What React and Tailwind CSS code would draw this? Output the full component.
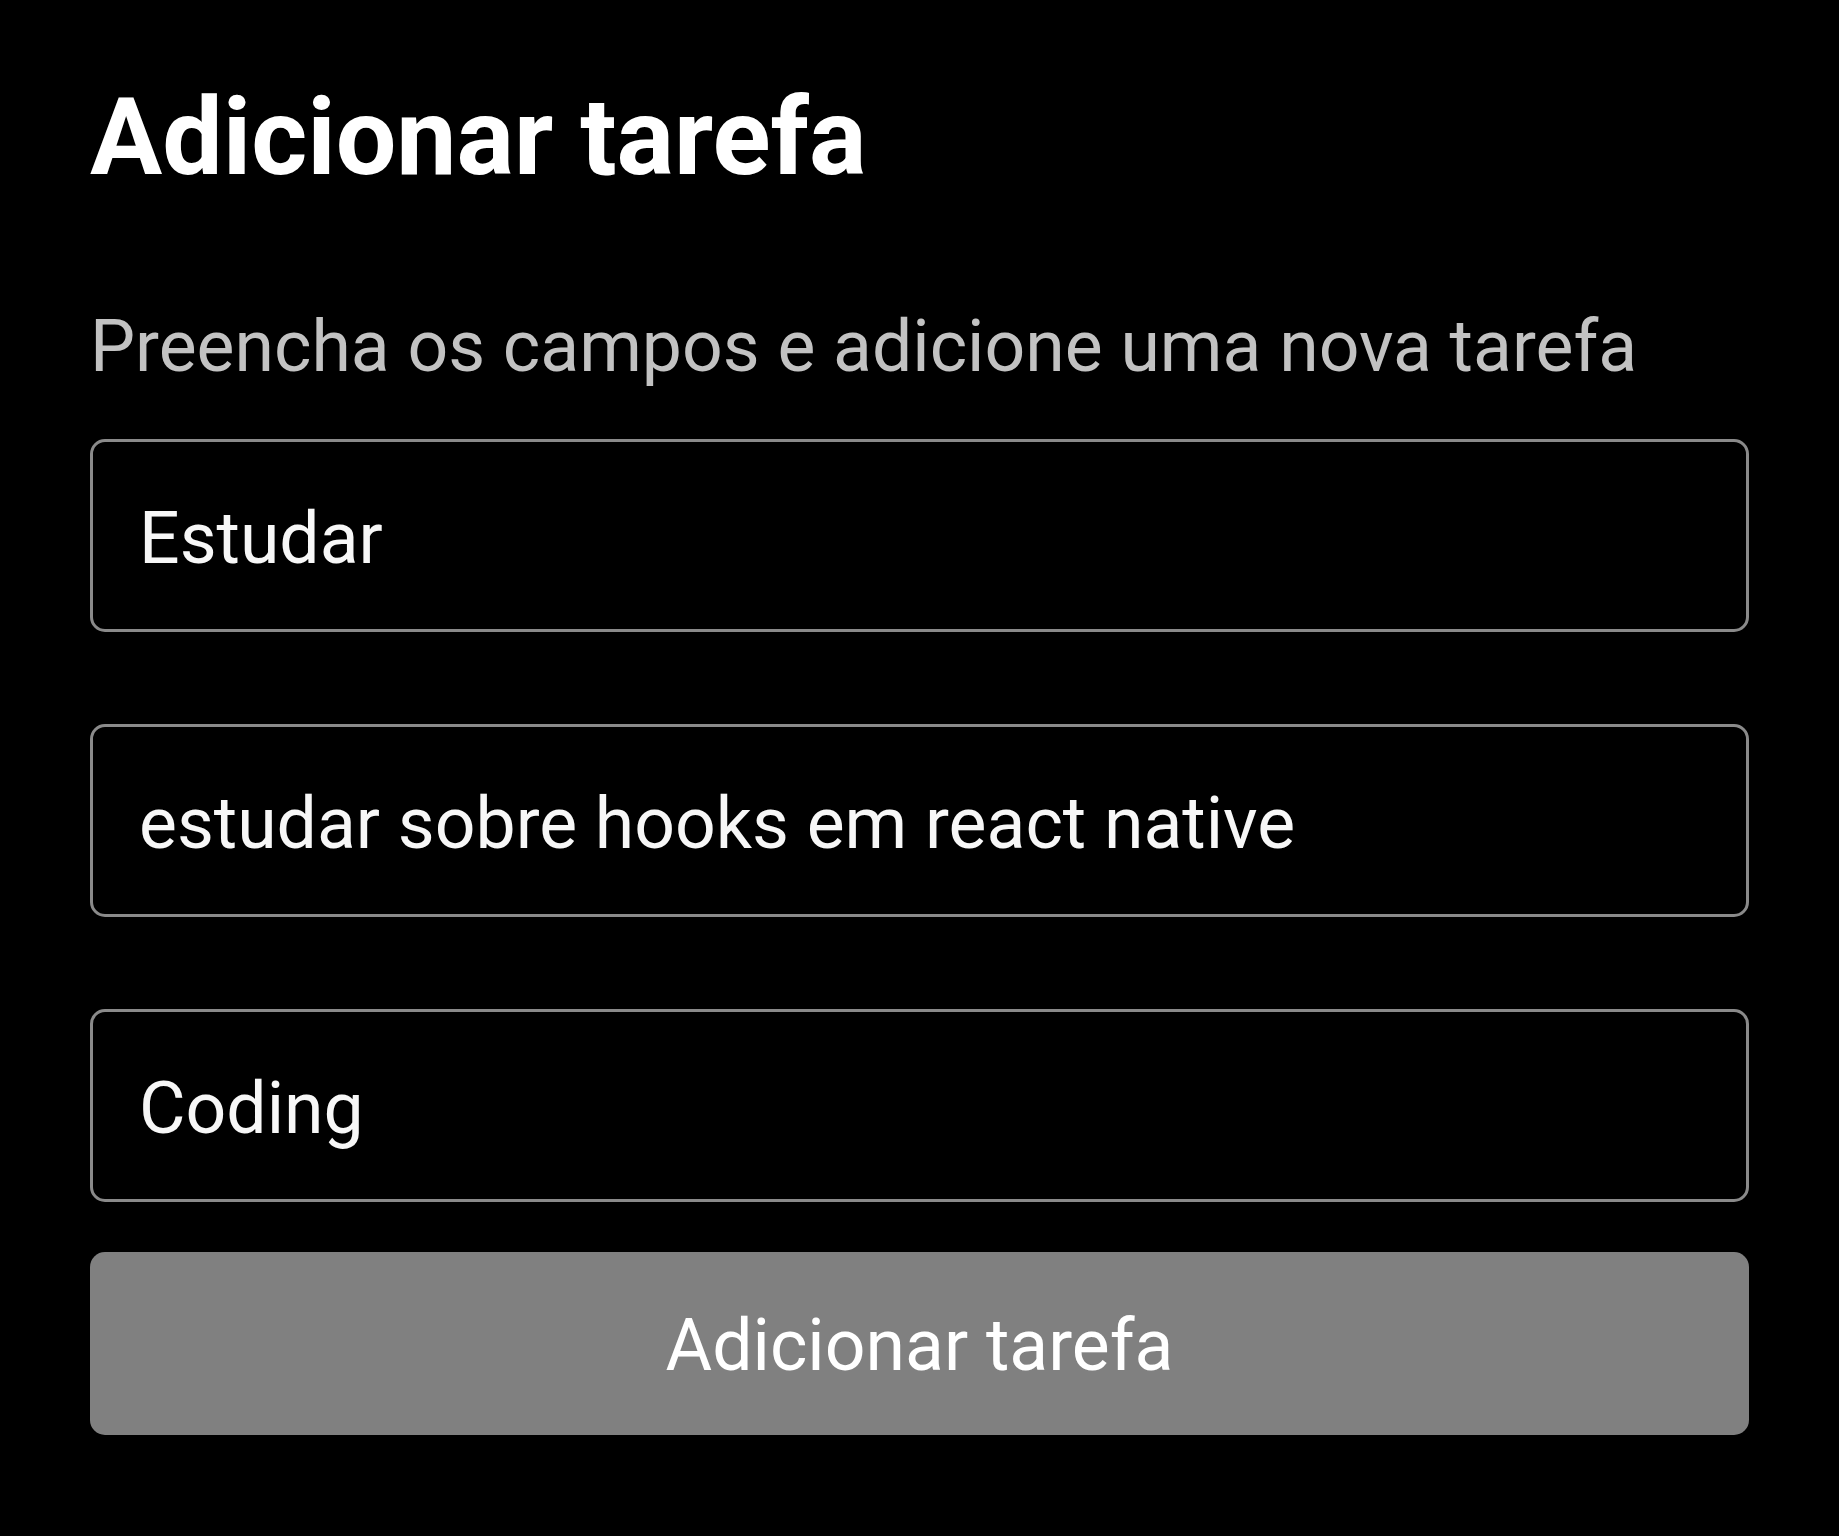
import React, { useState } from 'react';

function App() {
    const [titulo, setTitulo] = useState('Estudar');
    const [descricao, setDescricao] = useState('estudar sobre hooks em react native');
    const [categoria, setCategoria] = useState('Coding');

    const campos = [
        { value: titulo, onChange: setTitulo },
        { value: descricao, onChange: setDescricao },
        { value: categoria, onChange: setCategoria },
    ];

    return (
        <div className="min-h-[1536px] w-full bg-black font-['Roboto',sans-serif] px-[90px] pt-[84px]">
            <h1 className="text-[107.5px] leading-none font-bold text-white">
                Adicionar tarefa
            </h1>

            <p className="mt-[119px] text-[71.5px] leading-none text-[#c2c2c2]">
                Preencha os campos e adicione uma nova tarefa
            </p>

            <div className="mt-[57px] flex flex-col gap-[92px]">
                {campos.map((campo, i) => (
                    <input
                        key={i}
                        type="text"
                        value={campo.value}
                        onChange={(e) => campo.onChange(e.target.value)}
                        className="h-[193px] w-full rounded-[15px] border-[3px] border-[#8a8a8a] bg-black pl-[46px] pt-[6px] text-[71.5px] text-[#f7f7f7] outline-none"
                    />
                ))}
            </div>

            <button className="mt-[50px] flex h-[183px] w-full items-center justify-center rounded-[15px] bg-[#808080] pt-[4px] text-[71.5px] text-white">
                Adicionar tarefa
            </button>
        </div>
    );
}

export default App;
